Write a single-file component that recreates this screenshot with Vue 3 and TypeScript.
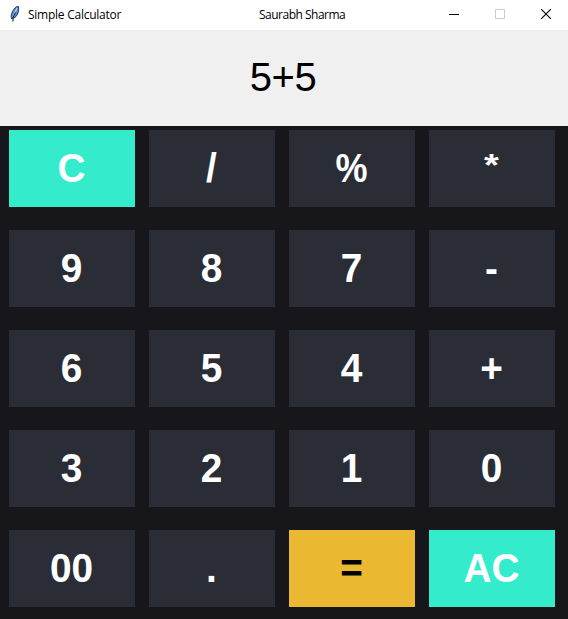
<script setup lang="ts">
interface Key {
  label: string
  kind?: 'accent' | 'equals'
  glyph?: 'percent' | 'star'
}

const expression = '5+5'

const keys: Key[] = [
  { label: 'C', kind: 'accent' }, { label: '/' }, { label: '%', glyph: 'percent' }, { label: '*', glyph: 'star' },
  { label: '9' }, { label: '8' }, { label: '7' }, { label: '-' },
  { label: '6' }, { label: '5' }, { label: '4' }, { label: '+' },
  { label: '3' }, { label: '2' }, { label: '1' }, { label: '0' },
  { label: '00' }, { label: '.' }, { label: '=', kind: 'equals' }, { label: 'AC', kind: 'accent' },
]
</script>

<template>
  <div class="window">
    <header class="titlebar">
      <svg class="feather" width="16" height="16" viewBox="0 0 16 16">
        <path d="M5.500 12.500C4.500 9.500 6 5 9 2C10.500 .5 12 0 12.500 .5C13 4 12.500 7.500 10 10.500C8.500 12 7 12.500 5.500 12.500Z" fill="#4f8ed8" stroke="#222a35" stroke-width=".9" />
        <path d="M7 11L11 2" stroke="#a5d0fa" stroke-width="1.300" fill="none" />
        <path d="M7 15.500L7 11.500L9.500 6.500" stroke="#111" stroke-width="1" fill="none" />
      </svg>
      <span class="title">Simple Calculator</span>
      <span class="author">Saurabh Sharma</span>
      <div class="controls">
        <svg width="10" height="10" viewBox="0 0 10 10"><path d="M0 5.500H10" stroke="#000" /></svg>
        <svg width="10" height="10" viewBox="0 0 10 10"><path d="M.5.5h9v9h-9z" stroke="#ccc" fill="none" /></svg>
        <svg width="10" height="10" viewBox="0 0 10 10"><path d="M0 0L10 10M10 0L0 10" stroke="#000" stroke-width="1.100" /></svg>
      </div>
    </header>
    <div class="display">{{ expression }}</div>
    <main class="keypad">
      <button v-for="key in keys" :key="key.label" class="key" :class="key.kind">
        <span class="label" :class="key.glyph">{{ key.label }}</span>
      </button>
    </main>
  </div>
</template>

<style>
body {
  margin: 0;
}
</style>

<style scoped>
.window {
  width: 568px;
  height: 619px;
  overflow: hidden;
  background: #17161b;
  font-family: "Liberation Sans", Arial, sans-serif;
}
.titlebar {
  box-sizing: border-box;
  height: 30px;
  display: flex;
  align-items: center;
  padding: 0 17px 2px 6px;
  background: #fff;
  color: #000;
  font: 12px/16px "Open Sans", "Noto Sans", sans-serif;
}
.title {
  width: 231px;
  margin-left: 6px;
  padding-top: 2px;
  letter-spacing: -0.25px;
}
.author {
  padding-top: 2px;
  letter-spacing: -0.5px;
}
.controls {
  display: flex;
  gap: 36px;
  margin-left: auto;
}
.controls svg {
  display: block;
}
.display {
  height: 96px;
  padding-right: 2px;
  background: #f0f0f0;
  color: #000;
  font-size: 40px;
  line-height: 94px;
  letter-spacing: -0.5px;
  text-align: center;
}
.keypad {
  display: grid;
  grid-template-columns: repeat(4, 126px);
  grid-auto-rows: 77px;
  gap: 23px 14px;
  padding: 4px 0 0 9px;
}
.key {
  border: 0;
  padding: 0 1px 0 0;
  background: #2a2d36;
  color: #fff;
  font: bold 40px/77px "Liberation Sans", Arial, sans-serif;
}
.label {
  display: block;
  transform: scaleX(0.97);
}
.percent {
  transform: scaleX(0.9);
}
.star {
  transform: scale(0.95, 0.8);
  transform-origin: 50% 21px;
}
.accent {
  background: #34eccb;
}
.equals {
  background: #eab831;
  color: #000;
}
</style>
